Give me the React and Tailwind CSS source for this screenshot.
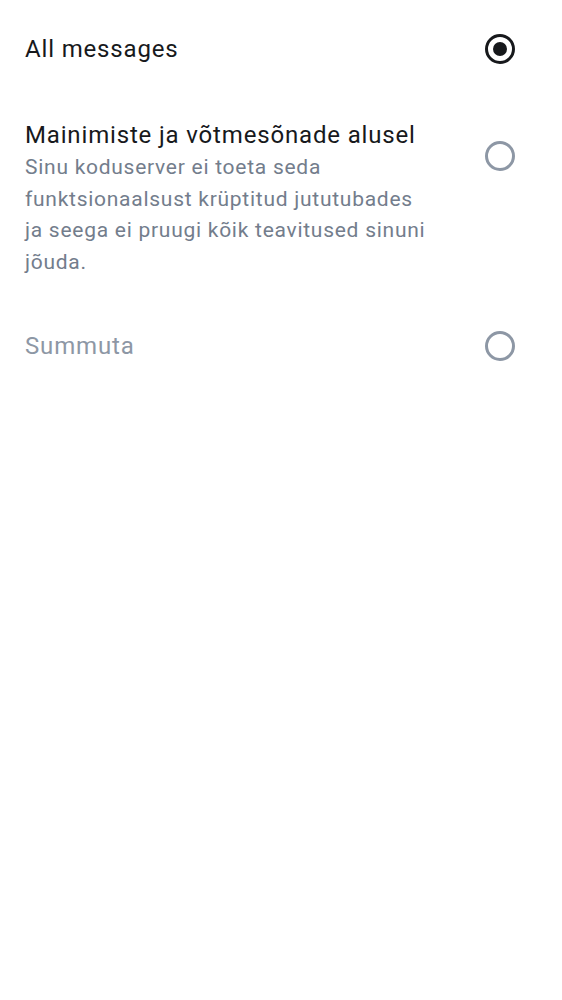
import React, { useState } from 'react';

const Radio = ({ checked, className = '' }) => (
  <div
    className={`w-[30px] h-[30px] rounded-full border-[3px] flex items-center justify-center shrink-0 ${
      checked ? 'border-[#17191c]' : 'border-[#8d97a5]'
    } ${className}`}
  >
    {checked && <div className="w-[14px] h-[14px] rounded-full bg-[#17191c]" />}
  </div>
);

export default function App() {
  const [value, setValue] = useState('all');

  return (
    <div
      className="w-[562px] h-[1000px] bg-white pt-[33px]"
      style={{ fontFamily: 'Roboto, "Noto Sans", sans-serif' }}
    >
      {/* All messages */}
      <div
        className="flex items-center justify-between pl-[25px] pr-[47px] cursor-pointer"
        onClick={() => setValue('all')}
      >
        <div className="text-[24px] leading-[32px] tracking-[0.035em] text-[#17191c]">All messages</div>
        <Radio checked={value === 'all'} />
      </div>

      {/* Mentions and keywords */}
      <div
        className="flex items-start justify-between pl-[25px] pr-[47px] mt-[54px] cursor-pointer"
        onClick={() => setValue('mentions')}
      >
        <div className="w-[408px]">
          <div className="text-[24px] leading-[32px] tracking-[0.035em] text-[#17191c]">
            Mainimiste ja võtmesõnade alusel
          </div>
          <div className="text-[21px] leading-[31.5px] tracking-[0.035em] text-[#737d8c] mt-[1px]">
            Sinu koduserver ei toeta seda funktsionaalsust krüptitud jututubades ja seega ei pruugi kõik
            teavitused sinuni jõuda.
          </div>
        </div>
        <Radio checked={value === 'mentions'} className="mt-[22px]" />
      </div>

      {/* Mute */}
      <div
        className="flex items-center justify-between pl-[25px] pr-[47px] mt-[52px] cursor-pointer"
        onClick={() => setValue('mute')}
      >
        <div className="text-[24px] leading-[32px] tracking-[0.035em] text-[#8d97a5]">Summuta</div>
        <Radio checked={value === 'mute'} />
      </div>
    </div>
  );
}
